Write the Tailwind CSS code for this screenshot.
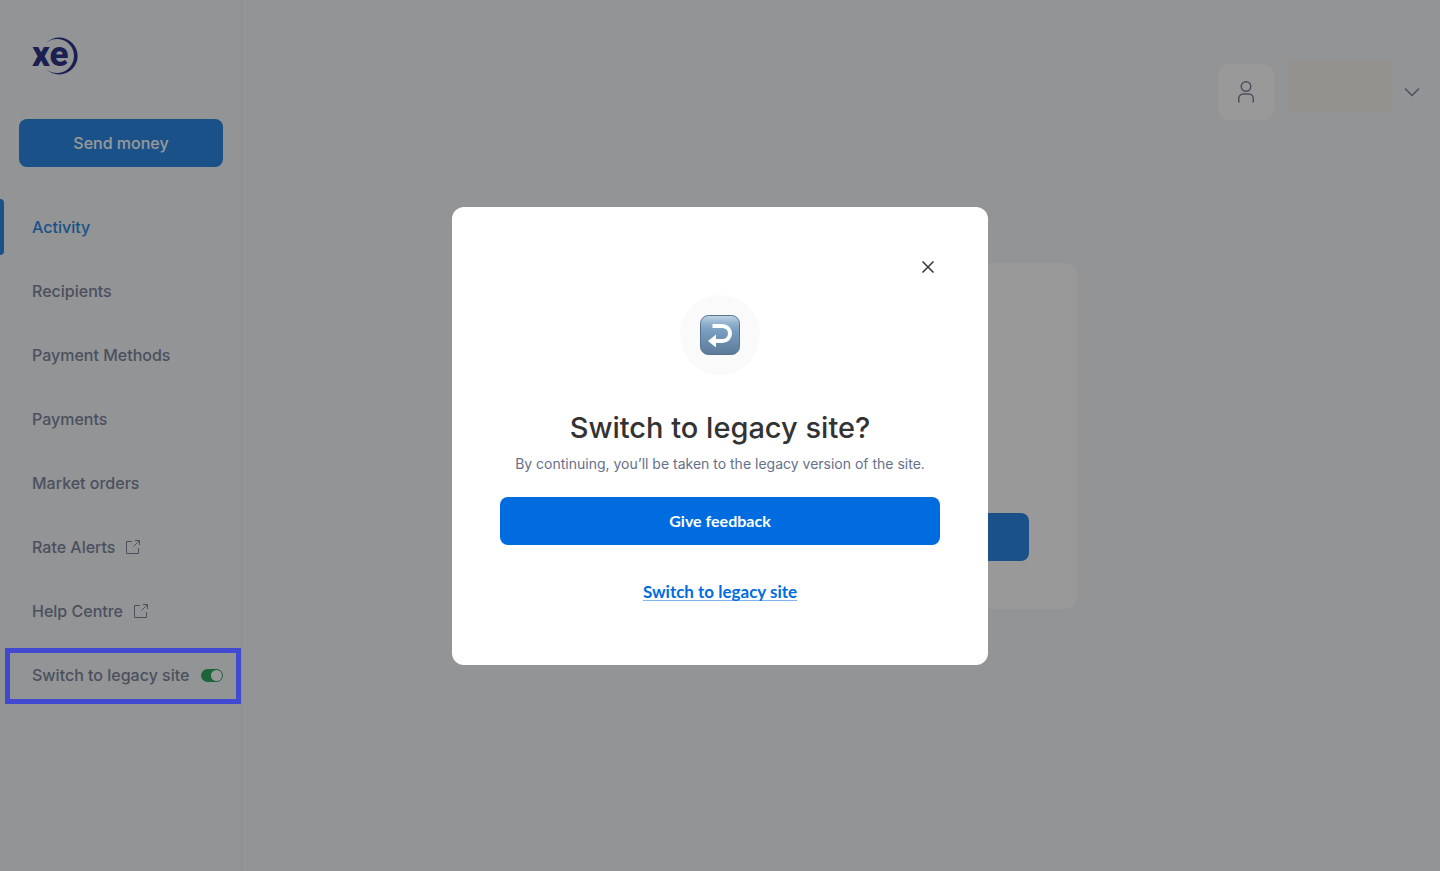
<!DOCTYPE html>
<html lang="en">

<head>
    <meta charset="UTF-8">
    <meta name="viewport" content="width=device-width, initial-scale=1.0">
    <title>Xe - Activity</title>
    <script src="https://cdn.jsdelivr.net/npm/@tailwindcss/browser@4"></script>
</head>

<body class="min-h-screen flex bg-[#f3f7fa] font-['Inter',sans-serif] text-[#7f869c]">

    <!-- Sidebar -->
    <aside class="w-[242px] shrink-0 min-h-screen border-r border-[#e9ecef]">
        <a href="#" aria-label="Xe home" class="block ml-7 mt-7 w-14">
            <svg class="w-14 h-14 text-[#2d3488]" viewBox="0 0 56 56" fill="currentColor">
                <text x="4" y="38" font-family="Roboto, sans-serif" font-weight="800" font-size="35">xe</text>
                <path d="M18 15A18.500 18.500 0 1 1 18 41A17 17 0 1 0 18 15Z" />
            </svg>
        </a>

        <button class="block mt-[35px] ml-[19px] w-[204px] h-12 rounded-lg bg-[#2d87e4] text-white font-medium">Send money</button>

        <nav class="mt-8 flex flex-col gap-2 font-medium">
            <a href="#" class="relative h-14 pl-8 flex items-center text-[#2d87e4]">
                <span class="absolute left-0 inset-y-0 w-1 rounded-r bg-[#2d87e4]"></span>
                Activity
            </a>
            <a href="#" class="h-14 pl-8 flex items-center">Recipients</a>
            <a href="#" class="h-14 pl-8 flex items-center">Payment Methods</a>
            <a href="#" class="h-14 pl-8 flex items-center">Payments</a>
            <a href="#" class="h-14 pl-8 flex items-center">Market orders</a>
            <a href="#" class="h-14 pl-8 flex items-center gap-[11px]">
                Rate Alerts
                <svg class="size-3.5" viewBox="0 0 14 14" fill="none" stroke="currentColor">
                    <path d="M6 1.5H.5v12h12V8M9 .5h4.500V5M13.500.5L7.500 6.500" />
                </svg>
            </a>
            <a href="#" class="h-14 pl-8 flex items-center gap-[11px]">
                Help Centre
                <svg class="size-3.5" viewBox="0 0 14 14" fill="none" stroke="currentColor">
                    <path d="M6 1.5H.5v12h12V8M9 .5h4.500V5M13.500.5L7.500 6.500" />
                </svg>
            </a>
            <div class="relative h-14 pl-8 pr-[18px] flex items-center justify-between">
                <label for="legacyToggle">Switch to legacy site</label>
                <span class="relative flex">
                    <input id="legacyToggle" type="checkbox" role="switch" checked
                        class="peer appearance-none w-[22px] h-[13px] rounded-full bg-gray-400 checked:bg-[#2fa863]">
                    <span class="absolute left-px peer-checked:left-auto peer-checked:right-px top-px size-[11px] rounded-full bg-white pointer-events-none"></span>
                </span>
                <!-- Highlight stays above the backdrop -->
                <span class="absolute z-20 top-px -bottom-px left-[5px] right-0 border-5 border-[#4049d0] pointer-events-none"></span>
            </div>
        </nav>
    </aside>

    <!-- Page -->
    <main class="flex-1 flex flex-col">
        <header class="pt-[60px] pr-4 flex justify-end items-start">
            <button aria-label="Profile" class="mt-1 size-14 rounded-xl bg-white flex items-center justify-center">
                <svg class="w-4 h-6" viewBox="0 0 16 24" fill="none" stroke="currentColor" stroke-width="1.500">
                    <circle cx="8" cy="6.500" r="4.750" />
                    <path d="M.75 22.500V18.500a4.500 4.500 0 0 1 4.500-4.500h5.500a4.500 4.500 0 0 1 4.500 4.500V22.500" />
                </svg>
            </button>
            <div class="ml-3.5 w-26 h-[52px] bg-[#f7f3ef]"></div>
            <button aria-label="Account menu" class="mt-5 ml-2 size-6 flex items-center justify-center">
                <svg class="w-4 h-2.5" viewBox="0 0 16 10" fill="none" stroke="currentColor" stroke-width="1.500">
                    <path d="M1 1.500l7 7 7-7" />
                </svg>
            </button>
        </header>

        <section class="mt-[143px] mx-auto w-[472px] h-[346px] rounded-xl bg-white p-12 flex flex-col justify-end">
            <button aria-label="Send money" class="h-12 w-full rounded-lg bg-[#2d87e4]"></button>
        </section>
    </main>

    <!-- Modal -->
    <div class="fixed inset-0 z-10 bg-black/40"></div>
    <div class="fixed inset-0 z-30 flex items-center justify-center pointer-events-none">
        <div role="dialog" aria-modal="true" aria-labelledby="modalTitle"
            class="w-[536px] rounded-xl bg-white p-12 flex flex-col items-center pointer-events-auto">
            <button aria-label="Close" class="self-end size-6 flex items-center justify-center text-[#333333]">
                <svg class="size-3" viewBox="0 0 12 12" fill="none" stroke="currentColor" stroke-width="1.500">
                    <path d="M.5.5l11 11M11.500.5l-11 11" />
                </svg>
            </button>

            <div class="mt-4 size-20 rounded-full bg-[#fafafa] flex items-center justify-center">
                <svg class="size-10" viewBox="0 0 40 40">
                    <defs>
                        <linearGradient id="keyFill" x1="0" y1="0" x2="0" y2="1">
                            <stop offset="0" stop-color="#c3d6e6" />
                            <stop offset=".18" stop-color="#96b5d0" />
                            <stop offset=".35" stop-color="#7ba0c2" />
                            <stop offset="1" stop-color="#5b7a98" />
                        </linearGradient>
                    </defs>
                    <rect x=".5" y=".5" width="39" height="39" rx="8" fill="url(#keyFill)" stroke="#567390" />
                    <path d="M12.500 11h10a7.500 7.500 0 0 1 0 15H15" fill="none" stroke="#fff" stroke-width="4" />
                    <path d="M8 26l8-6.500v13z" fill="#fff" />
                </svg>
            </div>

            <h2 id="modalTitle" class="mt-8 text-[29px] leading-[42px] font-medium text-[#333333]">Switch to legacy site?</h2>
            <p class="mt-1 text-sm leading-[22px] text-[#66708a]">By continuing, you’ll be taken to the legacy version of the site.</p>

            <button class="mt-[22px] w-full h-12 rounded-lg bg-[#006ce0] font-['Lato',sans-serif] font-bold text-white">Give feedback</button>
            <a href="#"
                class="mt-6 h-12 flex items-center font-['Lato',sans-serif] text-[17px] font-bold text-[#006ce0]"><span class="leading-4 border-b border-[#006ce0]/50">Switch to legacy site</span></a>
        </div>
    </div>

</body>

</html>
